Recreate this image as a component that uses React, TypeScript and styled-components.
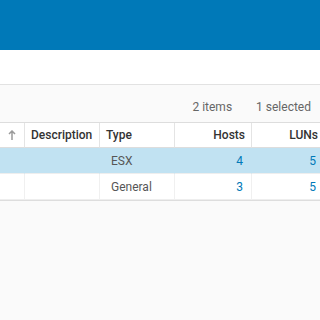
import { Fragment } from 'react';
import styled, { createGlobalStyle } from 'styled-components';

const GlobalStyle = createGlobalStyle`
  html, body {
    margin: 0;
    padding: 0;
    background: #fafafa;
    font-family: Roboto, "Liberation Sans", sans-serif;
  }
`;

const Page = styled.div`
  width: 320px;
  height: 320px;
  overflow: hidden;
  background: #fafafa;
`;

const Banner = styled.header`
  height: 50px;
  background: #0079b8;
`;

const Toolbar = styled.div`
  height: 34px;
  background: #fff;
  border-bottom: 1px solid #e2e2e2;
`;

const Summary = styled.div`
  display: flex;
  justify-content: flex-end;
  align-items: flex-end;
  gap: 24px;
  height: 37px;
  padding: 0 9px 8px 0;
  box-sizing: border-box;
  font-size: 12px;
  color: #666;
`;

const Grid = styled.div`
  width: 324px;
  display: grid;
  grid-template-columns: 24px 75px 75px 77px 73px;
  background: #fff;
  border-top: 1px solid #ddd;
  border-bottom: 1px solid #ddd;
`;

const HeadCell = styled.div<{ $right?: boolean }>`
  height: 24px;
  display: flex;
  align-items: center;
  justify-content: ${p => (p.$right ? 'flex-end' : 'flex-start')};
  padding: 0 6px;
  font-size: 12px;
  font-weight: 500;
  color: #333;
  border-left: 1px solid #e4e4e4;
  border-bottom: 1px solid #ddd;
  &:first-child {
    border-left: none;
    justify-content: center;
    padding: 0;
  }
`;

const Cell = styled.div<{ $selected?: boolean; $right?: boolean; $link?: boolean; $first?: boolean }>`
  height: 25px;
  display: flex;
  align-items: center;
  justify-content: ${p => (p.$right ? 'flex-end' : 'flex-start')};
  padding: ${p => (p.$right ? '0 8px 0 6px' : '0 6px 0 11px')};
  font-size: 12px;
  color: ${p => (p.$link ? '#0079b8' : '#565656')};
  background: ${p => (p.$selected ? '#c1e2f2' : '#fff')};
  border-left: ${p => (p.$first ? 'none' : `1px solid ${p.$selected ? '#c1e2f2' : '#f0f0f0'}`)};
  border-bottom: 1px solid #eee;
`;

const Arrow = () => (
  <svg width="8" height="11" viewBox="0 0 8 11">
    <path d="M4 1 L4 10 M1 4 L4 1 L7 4" fill="none" stroke="#9a9a9a" strokeWidth="1.5" />
  </svg>
);

const rows = [
  { type: 'ESX', hosts: 4, luns: 5, selected: true },
  { type: 'General', hosts: 3, luns: 5, selected: false },
];

export default function App() {
  return (
    <>
      <GlobalStyle />
      <Page>
        <Banner />
        <Toolbar />
        <Summary>
          <span>2 items</span>
          <span>1 selected</span>
        </Summary>
        <Grid>
          <HeadCell><Arrow /></HeadCell>
          <HeadCell>Description</HeadCell>
          <HeadCell>Type</HeadCell>
          <HeadCell $right>Hosts</HeadCell>
          <HeadCell $right>LUNs</HeadCell>
          {rows.map(row => (
            <Fragment key={row.type}>
              <Cell $selected={row.selected} $first />
              <Cell $selected={row.selected} />
              <Cell $selected={row.selected}>{row.type}</Cell>
              <Cell $selected={row.selected} $right $link>{row.hosts}</Cell>
              <Cell $selected={row.selected} $right $link>{row.luns}</Cell>
            </Fragment>
          ))}
        </Grid>
      </Page>
    </>
  );
}
